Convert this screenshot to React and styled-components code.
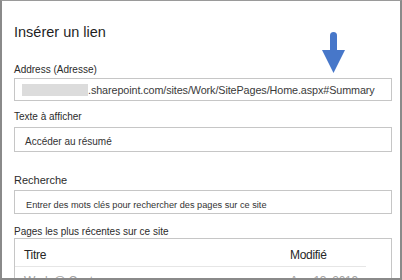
import React from 'react'
import styled, { createGlobalStyle } from 'styled-components'

const GlobalStyle = createGlobalStyle`
  html, body {
    margin: 0;
    padding: 0;
    background: #fff;
  }
  body {
    font-family: "Liberation Sans", Arial, sans-serif;
    color: #262626;
  }
`

const Dialog = styled.div`
  position: relative;
  box-sizing: border-box;
  width: 402px;
  height: 280px;
  overflow: hidden;
  border: 2px solid #8a8a8a;
  border-top: 1px solid #9a9a9a;
  padding: 21px 8px 0 12px;
  display: flex;
  flex-direction: column;

  & > * {
    flex-shrink: 0;
  }
`

const Title = styled.h1`
  margin: 0;
  font-size: 14.5px;
  line-height: 20px;
  font-weight: 400;
  color: #1f1f1f;
`

const Label = styled.div`
  margin-top: ${p => p.$mt}px;
  font-size: ${p => p.$size || 10}px;
  line-height: ${p => p.$lh || 12}px;
  color: #2b2b2b;
  white-space: nowrap;
`

const Field = styled.div`
  box-sizing: border-box;
  margin-top: ${p => p.$mt}px;
  height: ${p => p.$h}px;
  border: 1px solid #c6c6c6;
  padding: ${p => p.$pt}px 0 0 ${p => p.$pl}px;
  display: flex;
  align-items: flex-start;
  font-size: ${p => p.$size || 10}px;
  line-height: ${p => p.$lh || 12}px;
  color: #333;
  white-space: nowrap;
  overflow: hidden;
`

const Redacted = styled.span`
  display: inline-block;
  flex-shrink: 0;
  width: 66px;
  height: 12px;
  background: #dcdcdc;
  filter: blur(0.4px);
`

const Url = styled.span`
  letter-spacing: -0.1px;
  color: #3a3a3a;
`

const Table = styled.div`
  margin-top: 0.5px;
  border: 1px solid #c6c6c6;
  border-bottom: none;
`

const Row = styled.div`
  width: 351px;
  box-sizing: border-box;
  display: grid;
  grid-template-columns: 266px 1fr;
  padding: ${p => p.$pt}px 0 0 9px;
  height: ${p => p.$h}px;
  border-bottom: ${p => (p.$line ? '1px solid #e6e6e6' : 'none')};
  font-size: 12px;
  line-height: 14px;
  letter-spacing: -0.3px;
  color: ${p => (p.$muted ? '#a3a3a3' : '#262626')};
`

const Arrow = styled.svg`
  position: absolute;
  left: 318px;
  top: 29px;
`

export default function App() {
  return (
    <>
      <GlobalStyle />
      <Dialog>
        <Title>Insérer un lien</Title>

        <Label $mt={22}>Address (Adresse)</Label>
        <Field $mt={2} $h={23} $pt={5} $pl={7} $size={10.8} $lh={13}>
          <Redacted />
          <Url>.sharepoint.com/sites/Work/SitePages/Home.aspx#Summary</Url>
        </Field>

        <Label $mt={10}>Texte à afficher</Label>
        <Field $mt={4} $h={25} $pt={8} $pl={10}>
          Accéder au résumé
        </Field>

        <Label $mt={22} $size={11} $lh={13}>Recherche</Label>
        <Field $mt={3} $h={24} $pt={8.5} $pl={11} $size={9.2} $lh={11}>
          Entrer des mots clés pour rechercher des pages sur ce site
        </Field>

        <Label $mt={11.5}>Pages les plus récentes sur ce site</Label>
        <Table>
          <Row $pt={9} $h={28} $line>
            <span>Titre</span>
            <span>Modifié</span>
          </Row>
          <Row $pt={7} $h={30} $muted>
            <span>Work @ Contoso</span>
            <span>Aug 13, 2019</span>
          </Row>
        </Table>

        <Arrow width="27" height="44" viewBox="0 0 27 44">
          <path d="M10 5.5 a3.5 3.5 0 0 1 7 0 V21 H10 Z" fill="#4777c9" />
          <polygon points="2,20 25,20 13.5,43" fill="#4777c9" />
        </Arrow>
      </Dialog>
    </>
  )
}
